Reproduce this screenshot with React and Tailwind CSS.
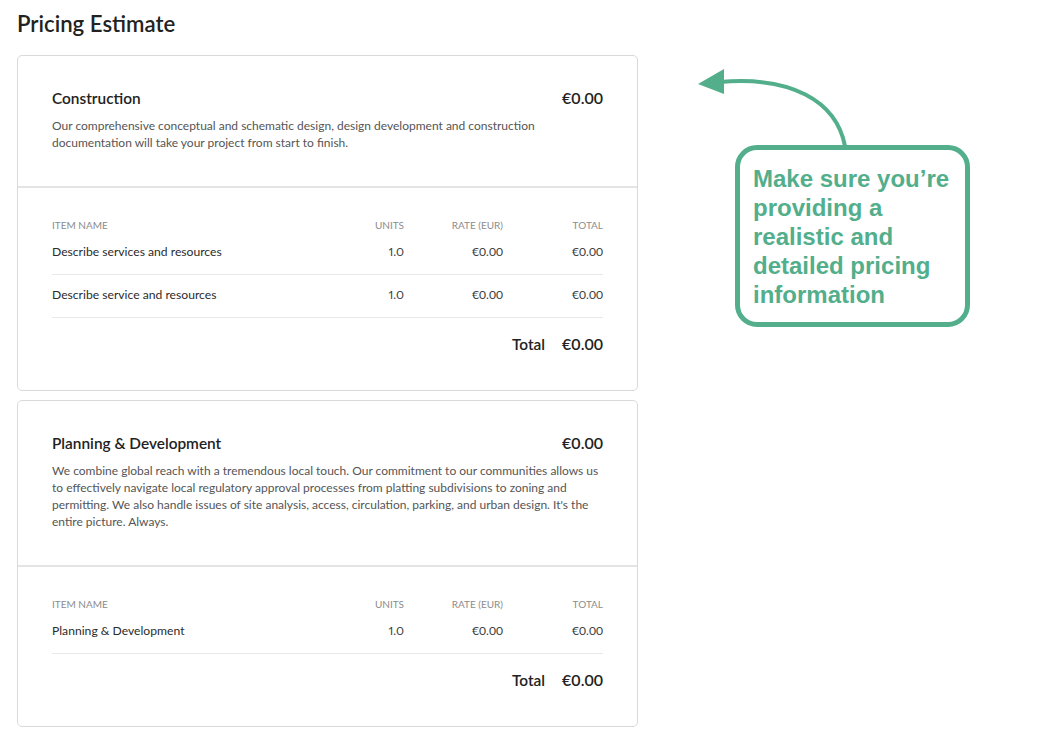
import React from 'react'

const cols = 'grid grid-cols-[1fr_80px_99px_100px]'

const Row = ({ name }) => (
  <div className={`${cols} items-center h-[43px] border-b border-[#e8e8e8] pb-[2px] text-[12.15px] text-[#3f3f3f]`}>
    <div className="text-[#2b2b2b]">{name}</div>
    <div className="text-right proportional-nums">1.0</div>
    <div className="text-right">€0.00</div>
    <div className="text-right">€0.00</div>
  </div>
)

const Card = ({ title, lines, rows }) => (
  <div className="border border-[#d9d9d9] rounded-[5px] bg-white">
    <div className="px-[34px] pt-[32px] pb-[35px] border-b-2 border-[#e4e4e4]">
      <div className="flex justify-between h-[20px] text-[15.4px] leading-[20px] font-semibold text-[#222]">
        <span>{title}</span>
        <span className="text-[16px] leading-[19px]">€0.00</span>
      </div>
      <div className="mt-[9px] text-[12px] leading-[17px] text-[#555]">
        {lines.map((l) => <div key={l}>{l}</div>)}
      </div>
    </div>
    <div className="px-[34px] pt-[30px] pb-[36px]">
      <div className={`${cols} h-[12px] items-center text-[10px] text-[#8c8c8c]`}>
        <div>ITEM NAME</div>
        <div className="text-right">UNITS</div>
        <div className="text-right">RATE (EUR)</div>
        <div className="text-right">TOTAL</div>
      </div>
      <div className="mt-[2px]">
        {rows.map((r) => <Row key={r} name={r} />)}
      </div>
      <div className="flex justify-end gap-[17px] mt-[16px] h-[20px] text-[15.4px] leading-[20px] font-semibold text-[#222]">
        <span>Total</span>
        <span className="text-[16px] leading-[19px]">€0.00</span>
      </div>
    </div>
  </div>
)

export default function App() {
  return (
    <div className="relative h-[748px] overflow-hidden bg-white px-[17px] pt-[11px] font-['Lato',sans-serif]">
      <h1 className="text-[22.2px] leading-[26px] font-semibold text-[#222]">Pricing Estimate</h1>
      <div className="w-[621px] mt-[18px] flex flex-col gap-[9px]">
        <Card
          title="Construction"
          lines={[
            'Our comprehensive conceptual and schematic design, design development and construction',
            'documentation will take your project from start to finish.',
          ]}
          rows={['Describe services and resources', 'Describe service and resources']}
        />
        <Card
          title="Planning & Development"
          lines={[
            'We combine global reach with a tremendous local touch. Our commitment to our communities allows us',
            'to effectively navigate local regulatory approval processes from platting subdivisions to zoning and',
            "permitting. We also handle issues of site analysis, access, circulation, parking, and urban design. It's the",
            'entire picture. Always.',
          ]}
          rows={['Planning & Development']}
        />
      </div>

      <svg className="absolute left-[690px] top-[60px]" width="170" height="90" viewBox="690 60 170 90" fill="none">
        <path d="M845 146C836 100 790 76 720 82" stroke="#52ae8b" strokeWidth="4" />
        <path d="M698 84L724 69V94Z" fill="#52ae8b" />
      </svg>
      <div className="absolute left-[735px] top-[145px] w-[235px] h-[182px] border-[5px] border-[#52ae8b] rounded-[22px] pl-[13px] pt-[14px] bg-white font-['Liberation_Sans',sans-serif] font-bold text-[24px] leading-[29px] text-[#52ae8b]">
        Make sure you’re<br />providing a<br />realistic and<br />detailed pricing<br />information
      </div>
    </div>
  )
}
